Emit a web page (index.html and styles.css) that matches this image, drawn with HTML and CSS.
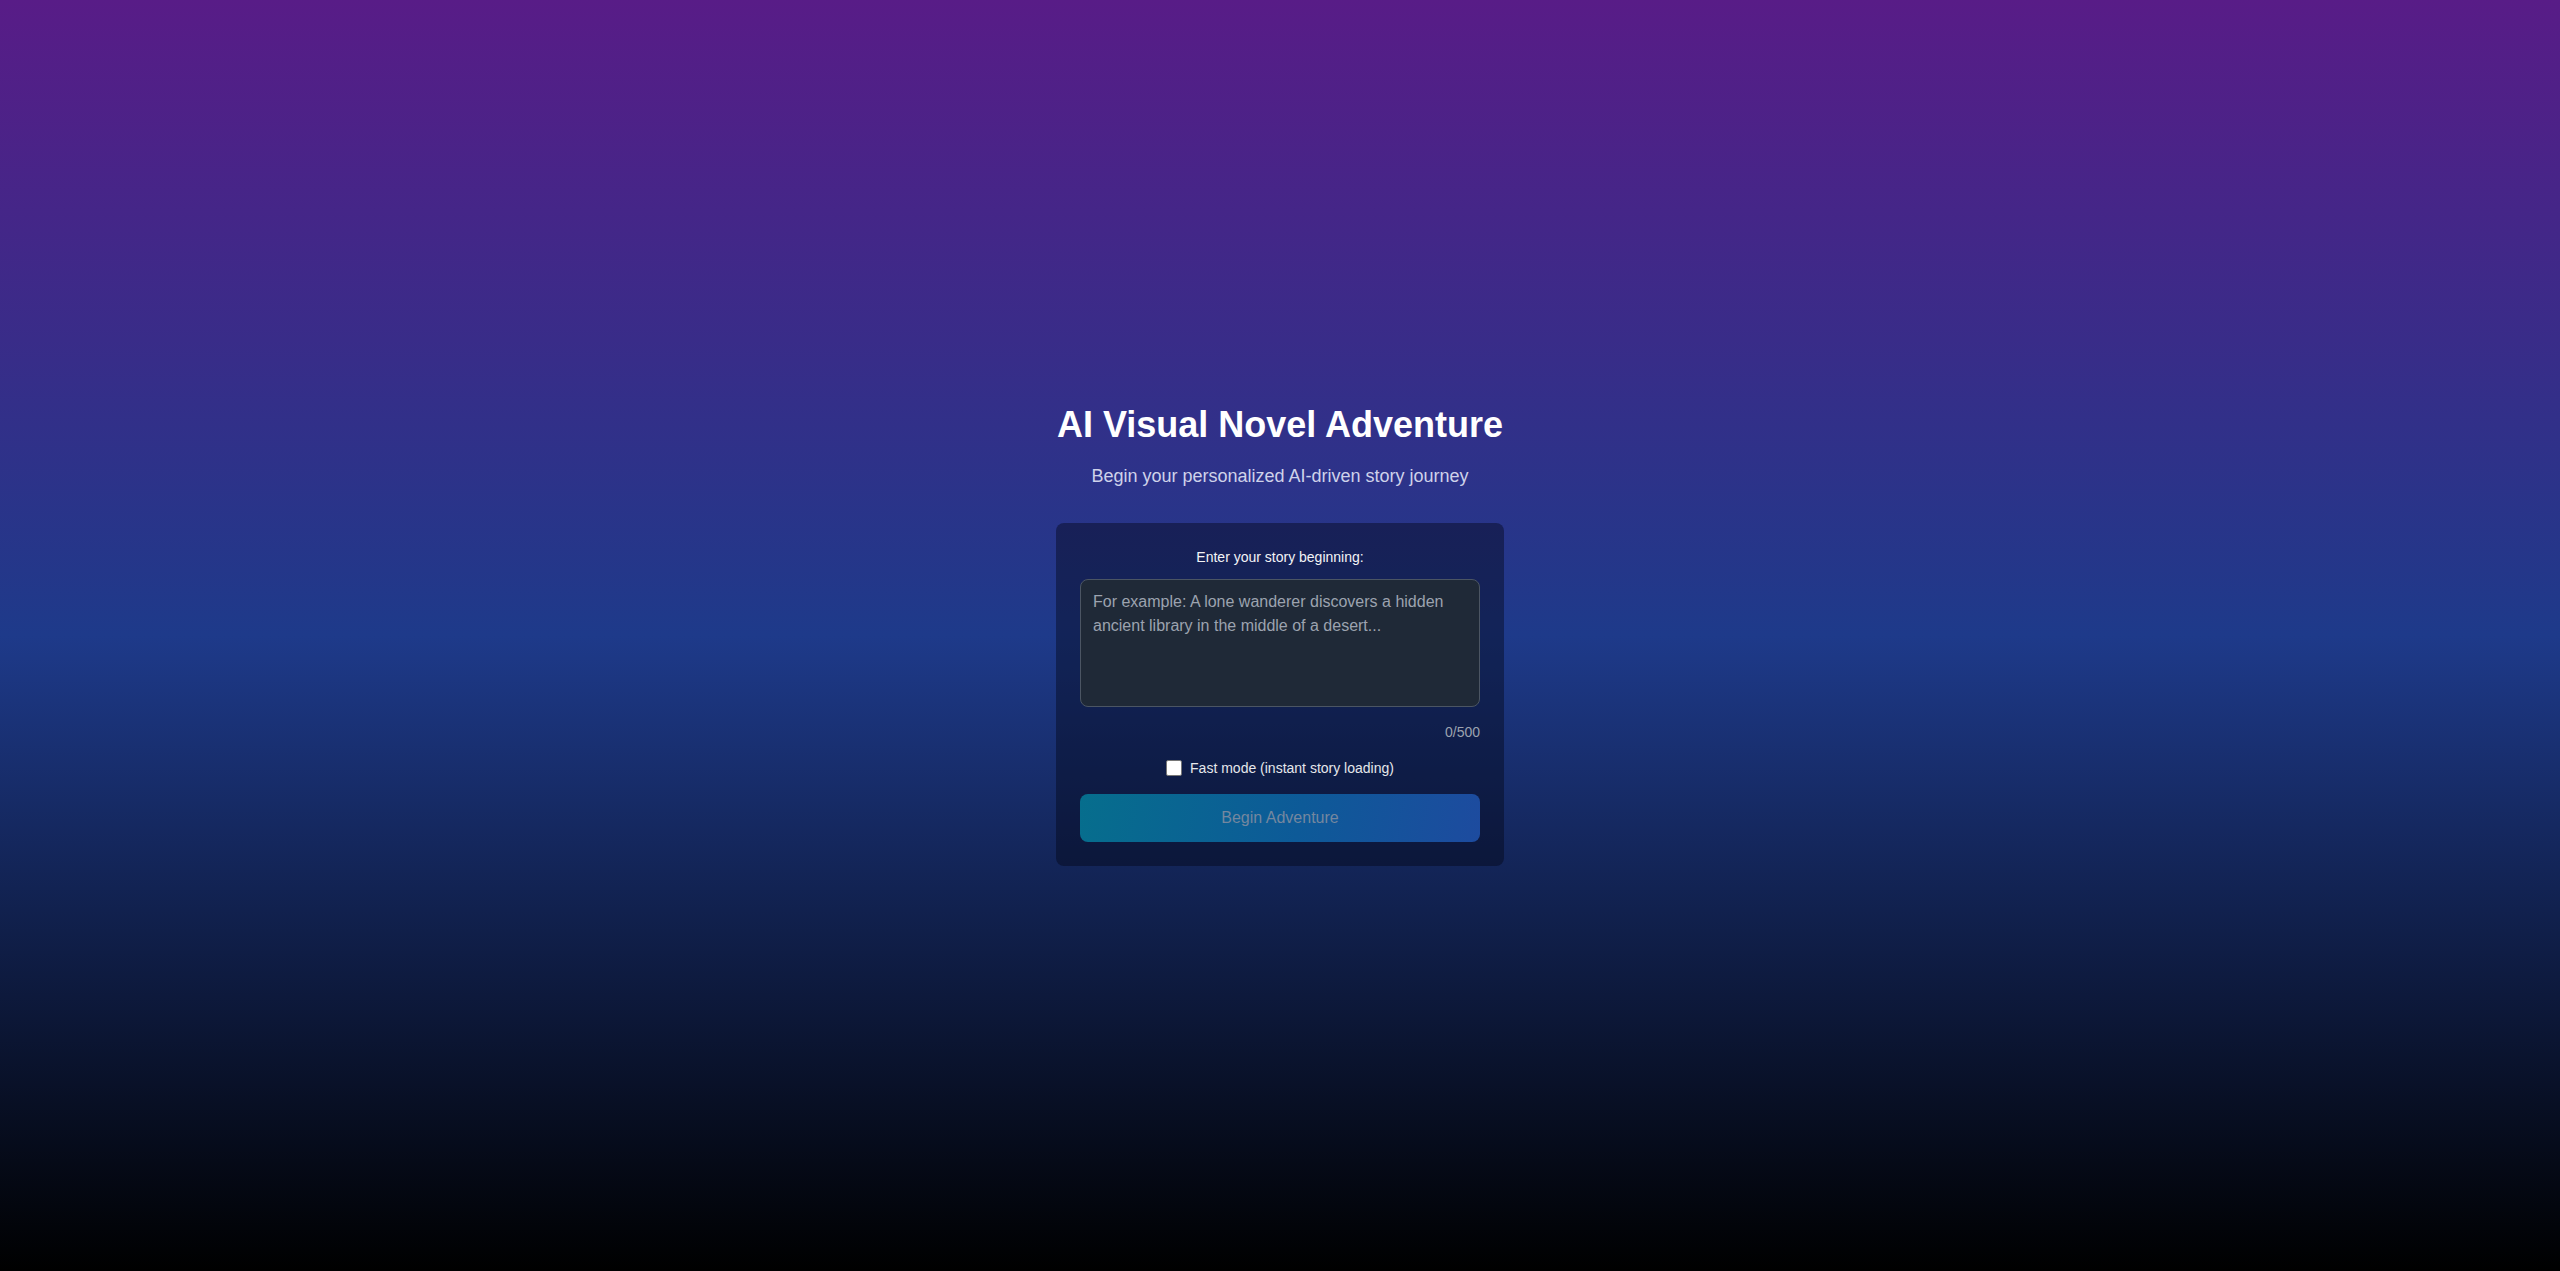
FILE: index.html
```html
<!DOCTYPE html>
<html lang="en">
<head>
<meta charset="utf-8">
<title>AI Visual Novel Adventure</title>
<link rel="stylesheet" href="styles.css">
</head>
<body>
<main class="screen">
  <div class="wrap">
    <h1 class="title">AI Visual Novel Adventure</h1>
    <p class="subtitle">Begin your personalized AI-driven story journey</p>
    <form class="card">
      <label class="label" for="story">Enter your story beginning:</label>
      <textarea id="story" class="story" placeholder="For example: A lone wanderer discovers a hidden ancient library in the middle of a desert..."></textarea>
      <div class="counter">0/500</div>
      <label class="fast">
        <input type="checkbox" class="check">
        <span>Fast mode (instant story loading)</span>
      </label>
      <button type="button" class="begin" disabled>Begin Adventure</button>
    </form>
  </div>
</main>
</body>
</html>
```

FILE: styles.css
```css
* { box-sizing: border-box; }
html, body {
  margin: 0;
  padding: 0;
  height: 100%;
}
body {
  font-family: "Liberation Sans", Arial, sans-serif;
  color: #ffffff;
  background: #000;
}
.screen {
  min-height: 100vh;
  display: flex;
  align-items: center;
  justify-content: center;
  background: linear-gradient(to bottom, #581c87 0%, #1e3a8a 50%, #000000 100%);
}
.wrap {
  width: 448px;
  display: flex;
  flex-direction: column;
  align-items: center;
}
.title {
  margin: 0 0 17px;
  font-size: 36px;
  line-height: 40px;
  font-weight: 700;
  color: #ffffff;
  text-align: center;
}
.subtitle {
  margin: 0 0 33px;
  font-size: 18px;
  line-height: 28px;
  color: #cfd2ea;
  text-align: center;
}
.card {
  width: 448px;
  padding: 24px;
  border-radius: 8px;
  background: rgba(2, 4, 20, 0.42);
  display: flex;
  flex-direction: column;
}
.label {
  display: block;
  font-size: 14px;
  line-height: 20px;
  color: #f3f4f6;
  text-align: center;
  margin-bottom: 12px;
}
.story {
  display: block;
  width: 100%;
  height: 128px;
  padding: 10px 12px;
  border: 1px solid #4b5563;
  border-radius: 8px;
  background: #1f2937;
  color: #ffffff;
  font-family: "Liberation Sans", Arial, sans-serif;
  font-size: 16px;
  line-height: 24px;
  resize: none;
  outline: none;
}
.story::placeholder {
  color: #9ca3af;
  opacity: 1;
}
.counter {
  margin-top: 15px;
  font-size: 14px;
  line-height: 20px;
  color: #9ca3af;
  text-align: right;
}
.fast {
  margin-top: 16px;
  display: flex;
  align-items: center;
  justify-content: center;
  gap: 8px;
  font-size: 14px;
  line-height: 20px;
  color: #e5e7eb;
}
.check {
  appearance: none;
  -webkit-appearance: none;
  margin: 0;
  width: 16px;
  height: 16px;
  border: 1px solid #767676;
  border-radius: 2px;
  background: #ffffff;
}
.begin {
  margin-top: 16px;
  height: 48px;
  width: 100%;
  border: none;
  border-radius: 8px;
  background: linear-gradient(100deg, #066e8d 0%, #0d5a98 55%, #1d4b9f 100%);
  color: #74879f;
  font-family: "Liberation Sans", Arial, sans-serif;
  font-size: 16px;
  line-height: 24px;
  cursor: not-allowed;
}
```
